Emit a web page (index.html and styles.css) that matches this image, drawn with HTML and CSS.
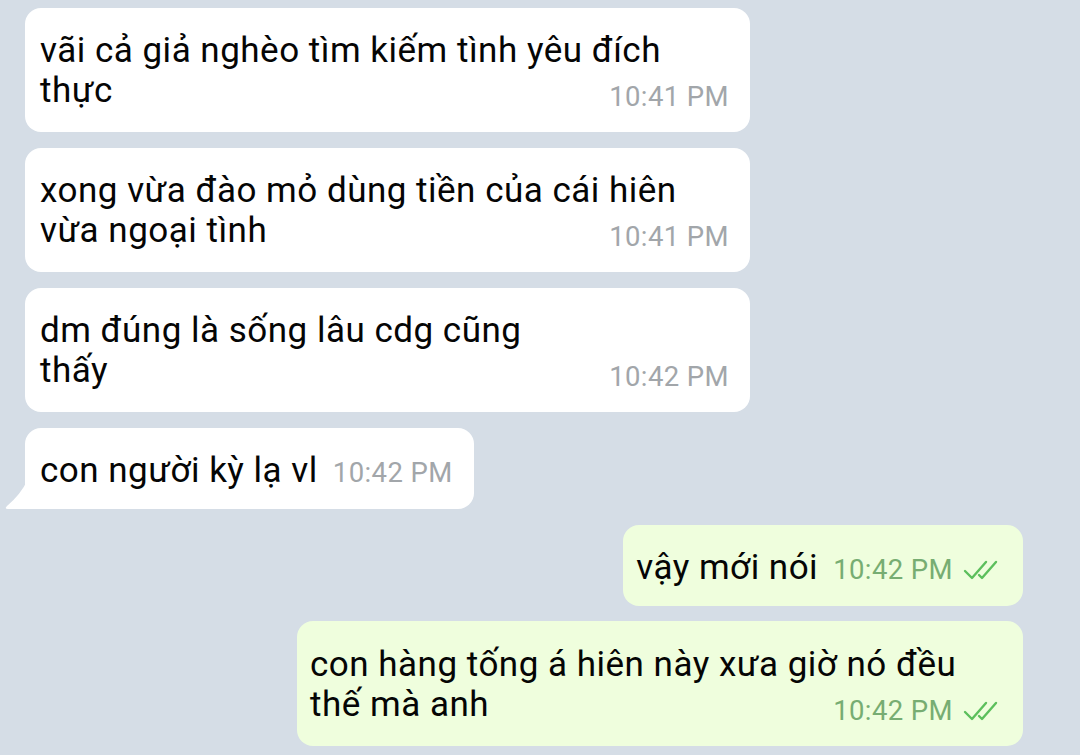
FILE: index.html
```html
<!DOCTYPE html>
<html lang="vi">
<head>
  <meta charset="UTF-8" />
  <title>Chat</title>
  <link rel="stylesheet" href="styles.css">
</head>
<body>
  <div class="chat">
    <div class="row in">
      <div class="bubble wide multi">vãi cả giả nghèo tìm kiếm tình yêu đích<br>thực<span class="meta">10:41 PM</span></div>
    </div>
    <div class="row in">
      <div class="bubble wide multi">xong vừa đào mỏ dùng tiền của cái hiên<br>vừa ngoại tình<span class="meta">10:41 PM</span></div>
    </div>
    <div class="row in">
      <div class="bubble wide multi">dm đúng là sống lâu cdg cũng<br>thấy<span class="meta">10:42 PM</span></div>
    </div>
    <div class="row in">
      <div class="bubble tailed">con người kỳ lạ vl<span class="meta inline">10:42 PM</span>
        <svg class="tail" width="22" height="28" viewBox="0 0 22 28"><path d="M22 0 V28 H3 Q-1 28 2 25 Q16 13 22 0 Z" fill="#fff"/></svg>
      </div>
    </div>
    <div class="row out">
      <div class="bubble">vậy mới nói<span class="meta inline">10:42 PM<svg class="checks" width="38" height="20" viewBox="0 0 38 20"><path d="M2 11 L9 18 L23 2 M16 15 L19 18 L33 2" fill="none" stroke="currentColor" stroke-width="2.4" stroke-linecap="round" stroke-linejoin="round"/></svg></span></div>
    </div>
    <div class="row out last">
      <div class="bubble wide multi">con hàng tống á hiên này xưa giờ nó đều<br>thế mà anh<span class="meta">10:42 PM<svg class="checks" width="38" height="20" viewBox="0 0 38 20"><path d="M2 11 L9 18 L23 2 M16 15 L19 18 L33 2" fill="none" stroke="currentColor" stroke-width="2.4" stroke-linecap="round" stroke-linejoin="round"/></svg></span></div>
    </div>
  </div>
</body>
</html>
```

FILE: styles.css
```css
body {
  margin: 0;
  background-color: #d5dde6;
  font-family: Roboto, "Noto Sans", sans-serif;
  color: #050505;
  overflow: hidden;
}
.chat {
  display: flex;
  flex-direction: column;
  gap: 16px;
  padding: 8px 57px 0 25px;
}
.row {
  display: flex;
}
.row.out {
  justify-content: flex-end;
}
.row.last {
  margin-top: -1px;
}
.bubble {
  position: relative;
  display: flow-root;
  background: #ffffff;
  border-radius: 16px;
  padding: 23px 21px 16px 15px;
  font-size: 35px;
  line-height: 40px;
  letter-spacing: 0.5px;
}
.bubble.wide {
  width: 725px;
  box-sizing: border-box;
}
.row.out .bubble {
  background: #effedd;
  padding-left: 13px;
  padding-right: 22px;
}
.row.out .bubble.wide {
  width: 726px;
  padding-top: 24px;
}
.meta {
  float: right;
  font-size: 27.5px;
  letter-spacing: 0.4px;
  line-height: 32px;
  padding-top: 10px;
  color: #a2a6aa;
}
.meta.inline {
  float: none;
  padding-top: 0;
  margin-left: 15px;
  line-height: 40px;
}
.bubble.multi {
  padding-bottom: 19px;
}
.row.out .meta {
  color: #77ad72;
}
.checks {
  color: #5cbf5c;
  margin-left: 10px;
  vertical-align: -1px;
}
.bubble.tailed {
  border-bottom-left-radius: 0;
}
.tail {
  position: absolute;
  left: -20px;
  bottom: 0;
}
```
